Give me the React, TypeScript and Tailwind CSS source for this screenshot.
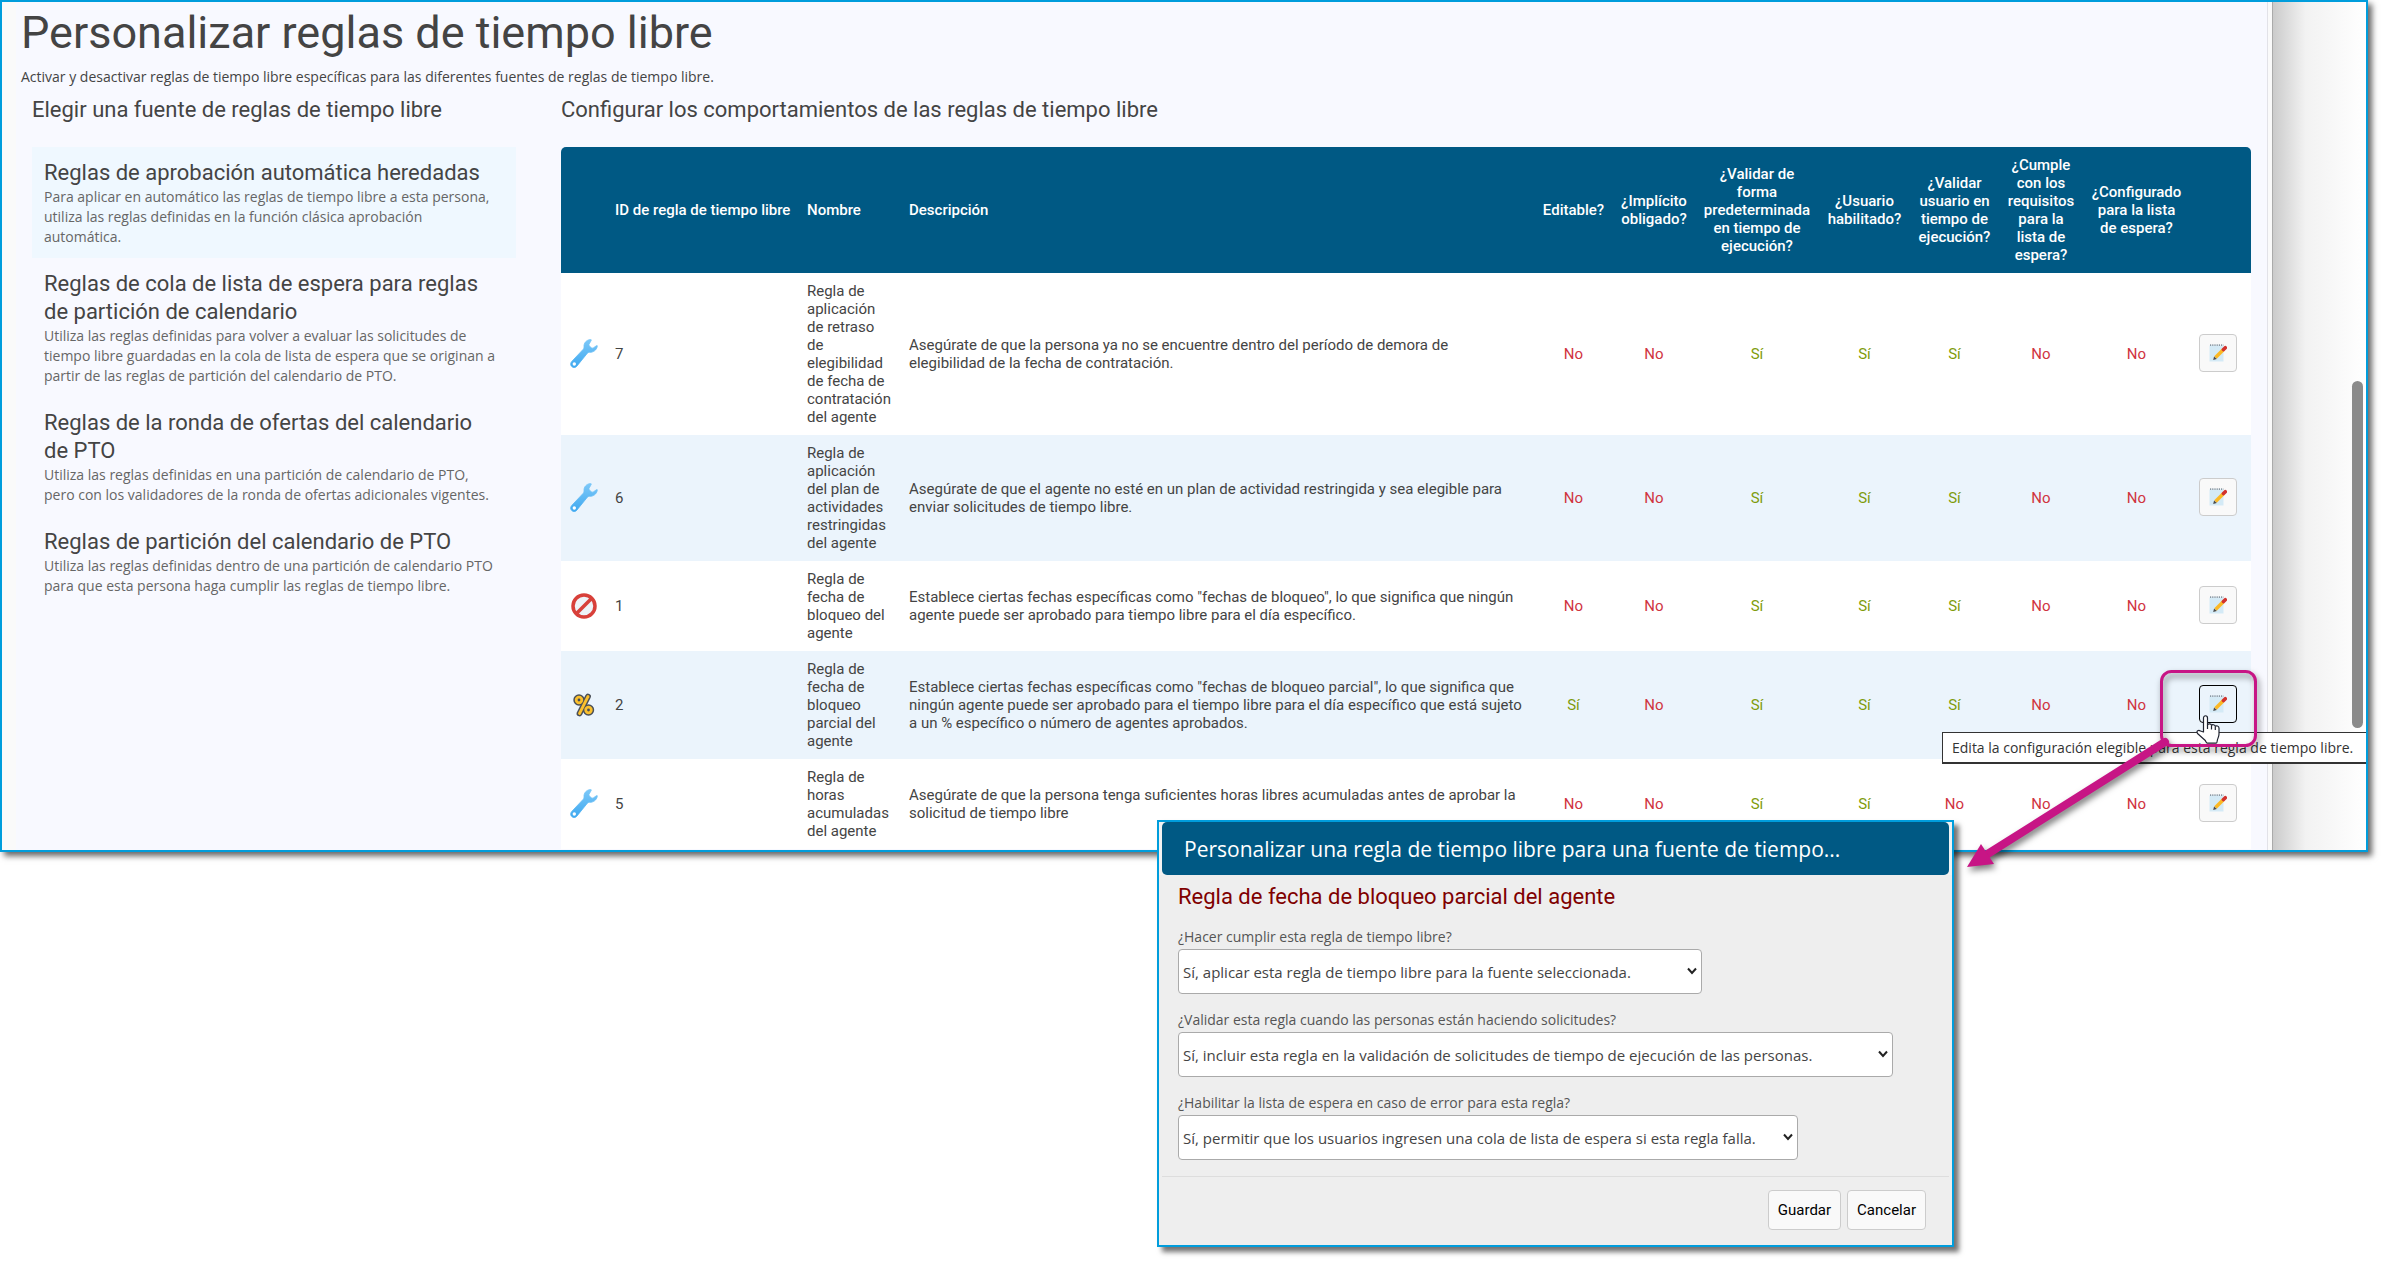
import type { ReactNode } from 'react'

type Source = { title: string; body: string }
type Rule = {
  icon: 'wrench' | 'blocked' | 'percent'
  id: number
  name: string
  description: string
  flags: boolean[]
}

const sources: Source[] = [
  {
    title: 'Reglas de aprobación automática heredadas',
    body: 'Para aplicar en automático las reglas de tiempo libre a esta persona, utiliza las reglas definidas en la función clásica aprobación automática.'
  },
  {
    title: 'Reglas de cola de lista de espera para reglas de partición de calendario',
    body: 'Utiliza las reglas definidas para volver a evaluar las solicitudes de tiempo libre guardadas en la cola de lista de espera que se originan a partir de las reglas de partición del calendario de PTO.'
  },
  {
    title: 'Reglas de la ronda de ofertas del calendario de PTO',
    body: 'Utiliza las reglas definidas en una partición de calendario de PTO, pero con los validadores de la ronda de ofertas adicionales vigentes.'
  },
  {
    title: 'Reglas de partición del calendario de PTO',
    body: 'Utiliza las reglas definidas dentro de una partición de calendario PTO para que esta persona haga cumplir las reglas de tiempo libre.'
  }
]

const rules: Rule[] = [
  {
    icon: 'wrench',
    id: 7,
    name: 'Regla de aplicación de retraso de elegibilidad de fecha de contratación del agente',
    description:
      'Asegúrate de que la persona ya no se encuentre dentro del período de demora de elegibilidad de la fecha de contratación.',
    flags: [false, false, true, true, true, false, false]
  },
  {
    icon: 'wrench',
    id: 6,
    name: 'Regla de aplicación del plan de actividades restringidas del agente',
    description:
      'Asegúrate de que el agente no esté en un plan de actividad restringida y sea elegible para enviar solicitudes de tiempo libre.',
    flags: [false, false, true, true, true, false, false]
  },
  {
    icon: 'blocked',
    id: 1,
    name: 'Regla de fecha de bloqueo del agente',
    description:
      'Establece ciertas fechas específicas como "fechas de bloqueo", lo que significa que ningún agente puede ser aprobado para tiempo libre para el día específico.',
    flags: [false, false, true, true, true, false, false]
  },
  {
    icon: 'percent',
    id: 2,
    name: 'Regla de fecha de bloqueo parcial del agente',
    description:
      'Establece ciertas fechas específicas como "fechas de bloqueo parcial", lo que significa que ningún agente puede ser aprobado para el tiempo libre para el día específico que está sujeto a un % específico o número de agentes aprobados.',
    flags: [true, false, true, true, true, false, false]
  },
  {
    icon: 'wrench',
    id: 5,
    name: 'Regla de horas acumuladas del agente',
    description:
      'Asegúrate de que la persona tenga suficientes horas libres acumuladas antes de aprobar la solicitud de tiempo libre',
    flags: [false, false, true, true, false, false, false]
  }
]

const flagColumns = [
  { label: 'Editable?', width: 'w-[79px]' },
  { label: '¿Implícito obligado?', width: 'w-[82px]' },
  { label: '¿Validar de forma predeterminada en tiempo de ejecución?', width: 'w-[124px]' },
  { label: '¿Usuario habilitado?', width: 'w-[91px]' },
  { label: '¿Validar usuario en tiempo de ejecución?', width: 'w-[89px]' },
  { label: '¿Cumple con los requisitos para la lista de espera?', width: 'w-[84px]' },
  { label: '¿Configurado para la lista de espera?', width: 'w-[107px]' }
]

function WrenchIcon() {
  return (
    <svg viewBox="0 0 28 32" className="h-8 w-7" aria-hidden>
      <defs>
        <linearGradient id="wrench" x1="0" y1="0" x2="0" y2="1">
          <stop offset="0" stopColor="#7cc8f8" />
          <stop offset="1" stopColor="#3fa9f0" />
        </linearGradient>
      </defs>
      <path
        fill="url(#wrench)"
        stroke="url(#wrench)"
        strokeWidth=".8"
        strokeLinejoin="round"
        d="M20.5 1.5c-4 .3-6.900 3.600-6.500 7.300.1 1.100-.1 1.700-.7 2.400L1.800 23.400c-1.500 1.600-1.500 3.900 0 5.200 1.500 1.400 3.700 1.200 5-.4l10.500-12.900c.6-.7 1.200-1 2.100-1 4.100.2 7.300-2.400 7.900-6 .1-.8-.2-1-.8-.6l-3.200 2.200c-.7.4-1.500.3-2.100-.2l-1.700-1.600c-.6-.6-.7-1.400-.3-2.100l2-3.500c.3-.6.100-1-.7-1z"
      />
      <circle cx="4.300" cy="26" r="1.700" fill="#fff" />
    </svg>
  )
}

function BlockedIcon() {
  return (
    <svg viewBox="0 0 28 32" className="h-8 w-7" aria-hidden>
      <circle cx="14" cy="16" r="11" fill="#eef3f8" stroke="#d8403a" strokeWidth="3.500" />
      <path d="M21.500 8.500 6.500 23.500" stroke="#d8403a" strokeWidth="3.500" />
    </svg>
  )
}

function PercentIcon() {
  return (
    <svg viewBox="0 0 28 32" className="h-8 w-7" fill="none" aria-hidden>
      <g stroke="#4a4f57" strokeWidth="5.800" strokeLinecap="round">
        <circle cx="9" cy="11" r="2.800" />
        <circle cx="18.500" cy="21" r="2.800" />
        <path d="M18 7.500 9.500 24.500" />
      </g>
      <g stroke="#fbc02d" strokeWidth="2.800" strokeLinecap="round">
        <circle cx="9" cy="11" r="2.800" />
        <circle cx="18.500" cy="21" r="2.800" />
        <path d="M18 7.500 9.500 24.500" />
      </g>
    </svg>
  )
}

const ruleIcons = { wrench: <WrenchIcon />, blocked: <BlockedIcon />, percent: <PercentIcon /> }

function MemoIcon() {
  return (
    <svg viewBox="0 0 18 18" className="size-[18px]" aria-hidden>
      <path fill="#d4eaf6" d="M.5 1.500h14v16H.5z" />
      <path d="M1 1.200h13.500" stroke="#8b98a3" strokeWidth="1.800" strokeDasharray="1.200 1" />
      <path d="m6.500 13.500 8-8" stroke="#fbb825" strokeWidth="3.600" />
      <path d="m14.500 5.500 1.800-1.800" stroke="#d2322d" strokeWidth="3.600" strokeLinecap="round" />
      <path fill="#4a4a4a" d="m4.200 16 .9-3.600 2.700 2.600z" />
    </svg>
  )
}

function HandCursor() {
  return (
    <svg viewBox="0 0 24 29" className="h-[29px] w-6" aria-hidden>
      <path
        fill="#fff"
        stroke="#1f2330"
        strokeWidth="1.200"
        strokeLinejoin="round"
        d="M7.500 17V3c0-3 4-3 4 0v7c.4-1.500 3.600-1.500 4 .5.700-1.300 3.500-1 3.800.9.900-.9 3.600-.6 3.700 1.600v6c0 3-1.500 4.500-1.700 6.500-.2 1.700-.5 2.700-1 2.700h-9c-1-.1-1.300-1.500-2.300-3L1.500 18.500c-1.500-2.500 1-4 3-2.500z"
      />
      <path d="M11.500 10v4M15.500 11v3.500M19.300 12v3" stroke="#1f2330" strokeWidth="1.200" />
    </svg>
  )
}

function RuleTable() {
  return (
    <table className="w-full table-fixed border-separate border-spacing-0 overflow-hidden rounded-t-[5px] font-[Roboto,sans-serif] text-[15px] leading-[18px] text-[#444]">
      <thead className="bg-[#005984] text-white">
        <tr>
          <th className="w-[45px]" aria-label="Tipo" />
          <th className="w-[192px] px-[9px] py-[9px] text-left font-medium whitespace-nowrap">
            ID de regla de tiempo libre
          </th>
          <th className="w-[102px] px-[9px] py-[9px] text-left font-medium">Nombre</th>
          <th className="px-[9px] py-[9px] text-left font-medium">Descripción</th>
          {flagColumns.map((column) => (
            <th key={column.label} className={`${column.width} px-2 py-[9px] text-center font-medium`}>
              {column.label}
            </th>
          ))}
          <th className="w-[61px]" aria-label="Editar" />
        </tr>
      </thead>
      <tbody>
        {rules.map((rule) => (
          <tr key={rule.id} className="bg-white even:bg-[#ebf4fc]">
            <td className="px-[9px]">{ruleIcons[rule.icon]}</td>
            <td className="px-[9px] py-[9px]">{rule.id}</td>
            <td className="px-[9px] py-[9px]">{rule.name}</td>
            <td className="px-[9px] py-[9px]">{rule.description}</td>
            {rule.flags.map((on, i) => (
              <td key={flagColumns[i].label} className={on ? 'text-center text-[#7f9c0c]' : 'text-center text-[#d0343f]'}>
                {on ? 'Sí' : 'No'}
              </td>
            ))}
            <td className="px-[9px] pb-[3px]">
              <button
                type="button"
                aria-label={`Editar regla ${rule.id}`}
                className={`flex size-[38px] items-center justify-center rounded border ${
                  rule.id === 2 ? 'border-black bg-[#ebf4fc]' : 'border-[#ccc] bg-[#f9f9f9]'
                }`}
              >
                <MemoIcon />
              </button>
            </td>
          </tr>
        ))}
      </tbody>
    </table>
  )
}

function SourceList() {
  return (
    <section className="w-[484px] shrink-0">
      <h2 className="font-[Roboto,sans-serif] text-[22px] leading-[30px]">Elegir una fuente de reglas de tiempo libre</h2>
      <ul className="mt-[22px]">
        {sources.map((source, i) => (
          <li key={source.title} className={`pt-3 pr-[18px] pb-[11px] pl-3 ${i === 0 ? 'bg-[#eff8ff]' : ''}`}>
            <h3 className="font-[Roboto,sans-serif] text-[22px] leading-7">{source.title}</h3>
            <p className="text-sm leading-5 text-[#666]">{source.body}</p>
          </li>
        ))}
      </ul>
    </section>
  )
}

function SelectField({ id, label, value, width }: { id: string; label: string; value: string; width: string }) {
  return (
    <div className="flex flex-col items-start">
      <label htmlFor={id} className="text-sm leading-6 text-[#555]">
        {label}
      </label>
      <div className={`relative ${width}`}>
        <select
          id={id}
          className="h-[45px] w-full appearance-none rounded border border-[#aaa] bg-white pt-0.5 pl-1 text-[15px] text-[#444]"
        >
          <option>{value}</option>
        </select>
        <svg viewBox="0 0 10 8" className="pointer-events-none absolute top-[18px] right-[5px] h-2 w-[10px]" aria-hidden>
          <path d="m1 1.500 4 4.500 4-4.500" fill="none" stroke="#222" strokeWidth="2" />
        </svg>
      </div>
    </div>
  )
}

function DialogButton({ children }: { children: ReactNode }) {
  return (
    <button
      type="button"
      className="h-10 rounded border border-[#ccc] bg-[#f9f9f9] px-[9px] font-[Roboto,sans-serif] text-[15px] text-black"
    >
      {children}
    </button>
  )
}

function RuleDialog() {
  return (
    <div
      role="dialog"
      aria-labelledby="dialog-title"
      className="absolute top-[820px] left-[1157px] w-[797px] border-2 border-[#009ddc] bg-[#eee] shadow-[5px_5px_5px_#0000008c]"
    >
      <div className="bg-[#f2f2f2] px-[3px]">
        <h2 id="dialog-title" className="rounded-[5px] bg-[#005984] pt-px pl-[22px] text-[21px] leading-[52px] text-white">
          Personalizar una regla de tiempo libre para una fuente de tiempo...
        </h2>
      </div>
      <div className="px-[19px] pt-1.5">
        <h3 className="font-[Roboto,sans-serif] text-[22px] leading-8 text-[#7f0000]">
          Regla de fecha de bloqueo parcial del agente
        </h3>
        <div className="mt-3 flex flex-col gap-[14px]">
          <SelectField
            id="enforce"
            label="¿Hacer cumplir esta regla de tiempo libre?"
            value="Sí, aplicar esta regla de tiempo libre para la fuente seleccionada."
            width="w-[524px]"
          />
          <SelectField
            id="validate"
            label="¿Validar esta regla cuando las personas están haciendo solicitudes?"
            value="Sí, incluir esta regla en la validación de solicitudes de tiempo de ejecución de las personas."
            width="w-[715px]"
          />
          <SelectField
            id="waitlist"
            label="¿Habilitar la lista de espera en caso de error para esta regla?"
            value="Sí, permitir que los usuarios ingresen una cola de lista de espera si esta regla falla."
            width="w-[620px]"
          />
        </div>
      </div>
      <div className="mx-[3px] mt-4 flex justify-end gap-1.5 border-t border-[#ddd] pt-[13px] pr-[23px] pb-[15px]">
        <DialogButton>Guardar</DialogButton>
        <DialogButton>Cancelar</DialogButton>
      </div>
    </div>
  )
}

function Callout() {
  return (
    <svg
      viewBox="1940 660 340 230"
      className="pointer-events-none absolute top-[660px] left-[1940px] h-[230px] w-[340px] drop-shadow-[2px_4px_3px_#00000080]"
      aria-hidden
    >
      <rect x="2161.500" y="671.500" width="94" height="74" rx="10" fill="none" stroke="#c71585" strokeWidth="3" />
      <path d="M2165 742 1986 855" stroke="#c71585" strokeWidth="8" strokeLinecap="round" />
      <path d="m1967 867 14-23 13 20z" fill="#c71585" />
    </svg>
  )
}

export default function App() {
  return (
    <div className="relative min-h-screen overflow-hidden bg-white font-['Open_Sans','Noto_Sans',sans-serif] text-[#444]">
      <div className="mr-[14px] flex h-[852px] overflow-hidden border-2 border-[#009ddc] bg-white shadow-[4px_4px_6px_#00000099]">
        <div className="min-w-0 flex-1 border-r border-[#aaa] bg-[#fafafa] pr-1 pl-[14px]">
          <main className="h-full border-r border-[#e2e2e8] bg-[#f8f9ff] pt-px pr-[16px] pl-[5px]">
            <h1 className="font-[Roboto,sans-serif] text-[45px] leading-[60px]">Personalizar reglas de tiempo libre</h1>
            <p className="text-sm leading-[28px]">
              Activar y desactivar reglas de tiempo libre específicas para las diferentes fuentes de reglas de tiempo libre.
            </p>
            <div className="flex gap-[45px] pt-1 pl-[11px]">
              <SourceList />
              <section className="min-w-0 flex-1">
                <h2 className="font-[Roboto,sans-serif] text-[22px] leading-[30px]">
                  Configurar los comportamientos de las reglas de tiempo libre
                </h2>
                <div className="mt-[22px]">
                  <RuleTable />
                </div>
              </section>
            </div>
          </main>
        </div>
        <div className="w-[93px] shrink-0 bg-gradient-to-r from-[#cbcbcb] via-[#f2f2f2] via-35% to-white pt-[379px] pl-[79px]">
          <div className="h-[347px] w-[11px] rounded-full bg-[#8b8b8b]" />
        </div>
      </div>

      <div
        role="tooltip"
        className="absolute top-[732px] right-4 w-[424px] border border-r-0 border-b-2 border-[#333] bg-white pl-[9px] text-sm leading-[29px] whitespace-nowrap text-[#333]"
      >
        Edita la configuración elegible para esta regla de tiempo libre.
      </div>
      <RuleDialog />
      <Callout />
      <div className="absolute top-[715px] left-[2196px]">
        <HandCursor />
      </div>
    </div>
  )
}
